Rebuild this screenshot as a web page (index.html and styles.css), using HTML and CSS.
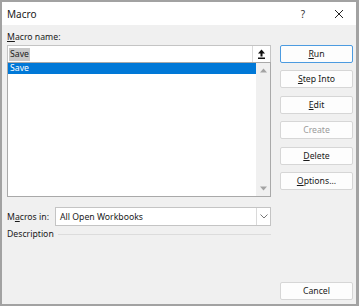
FILE: index.html
```html
<!DOCTYPE html>
<html lang="en">
<head>
    <meta charset="UTF-8">
    <title>Macro</title>
    <link rel="stylesheet" href="styles.css">
</head>
<body>
    <div class="dialog">
        <div class="titlebar">
            <span class="title">Macro</span>
            <span class="help">?</span>
            <svg class="close" width="10" height="10" viewBox="0 0 10 10">
                <path d="M1 1L9 9M9 1L1 9" stroke="#222" stroke-width="1" fill="none"/>
            </svg>
        </div>
        <div class="content">
            <div class="left">
                <div class="label"><u>M</u>acro name:</div>
                <div class="namebox">
                    <span class="value"><span class="sel">Save</span></span>
                    <span class="pick">
                        <svg width="9" height="10" viewBox="0 0 9 10">
                            <path d="M4.5 0.5L8 4.5H5.5V7.5H3.5V4.5H1Z" fill="#111"/>
                            <rect x="1" y="8.5" width="7" height="1.5" fill="#111"/>
                        </svg>
                    </span>
                </div>
                <div class="list">
                    <div class="items">
                        <div class="item active">Save</div>
                    </div>
                    <div class="scroll">
                        <svg width="7" height="5" viewBox="0 0 7 5"><path d="M3.5 0.5L7 4.5H0Z" fill="#a3a3a3"/></svg>
                        <svg width="7" height="5" viewBox="0 0 7 5"><path d="M0 0.5H7L3.5 4.5Z" fill="#a3a3a3"/></svg>
                    </div>
                </div>
                <div class="where">
                    <span class="where-label">M<u>a</u>cros in:</span>
                    <div class="select">
                        <span class="value">All Open Workbooks</span>
                        <span class="arrow">
                            <svg width="8" height="5" viewBox="0 0 8 5"><path d="M0.5 0.5L4 4L7.5 0.5" stroke="#777" stroke-width="1" fill="none"/></svg>
                        </span>
                    </div>
                </div>
                <div class="desc">Description</div>
            </div>
            <div class="right">
                <button class="btn default"><u>R</u>un</button>
                <button class="btn"><u>S</u>tep Into</button>
                <button class="btn"><u>E</u>dit</button>
                <button class="btn disabled">Create</button>
                <button class="btn"><u>D</u>elete</button>
                <button class="btn"><u>O</u>ptions...</button>
                <button class="btn cancel">Cancel</button>
            </div>
        </div>
    </div>
</body>
</html>
```

FILE: styles.css
```css
body {
    margin: 0;
    font-family: "Noto Sans", "Open Sans", sans-serif;
    font-size: 8.7px;
    color: #1a1a1a;
}
u {
    text-decoration-thickness: 1px;
    text-underline-offset: 1px;
}
.dialog {
    width: 359px;
    height: 306px;
    box-sizing: border-box;
    border: 2px solid #a2a2a2;
    border-right-width: 3px;
    background: #f0f0f0;
    display: flex;
    flex-direction: column;
}
.titlebar {
    height: 23px;
    background: #fff;
    display: flex;
    align-items: center;
    padding: 0 12px 0 5px;
}
.title {
    font-size: 10px;
    flex: 1;
}
.help {
    font-size: 10px;
    color: #333;
    margin-right: 29px;
}
.content {
    flex: 1;
    display: flex;
    gap: 9px;
    padding: 0 3px 4px 5px;
}
.left {
    width: 264px;
    display: flex;
    flex-direction: column;
}
.label {
    height: 12px;
    line-height: 12px;
    margin: 6px 0 2px;
}
.namebox {
    height: 18px;
    box-sizing: border-box;
    border: 1px solid #c4c4c4;
    background: #fff;
    display: flex;
}
.namebox .value {
    flex: 1;
    display: flex;
    align-items: center;
    padding-left: 1px;
}
.sel {
    background: #c8c8c8;
    padding: 0 1px;
    line-height: 13px;
}
.pick {
    width: 17px;
    border-left: 1px solid #dadada;
    display: flex;
    align-items: center;
    justify-content: center;
}
.list {
    height: 135px;
    margin-top: -1px;
    box-sizing: border-box;
    border: 1px solid #a9a9a9;
    background: #fff;
    display: flex;
}
.items {
    flex: 1;
}
.item {
    height: 11px;
    line-height: 11px;
    padding-left: 2px;
}
.item.active {
    background: #0078d7;
    color: #fff;
}
.scroll {
    width: 14px;
    background: #f0f0f0;
    display: flex;
    flex-direction: column;
    justify-content: space-between;
    align-items: center;
    padding: 5px 0 5px;
}
.where {
    display: flex;
    align-items: center;
    margin-top: 10px;
}
.where-label {
    width: 48px;
}
.select {
    flex: 1;
    height: 19px;
    box-sizing: border-box;
    border: 1px solid #c4c4c4;
    background: #fff;
    display: flex;
}
.select .value {
    flex: 1;
    display: flex;
    align-items: center;
    padding-left: 4px;
}
.select .arrow {
    width: 13px;
    border-left: 1px solid #dadada;
    display: flex;
    align-items: center;
    justify-content: center;
}
.desc {
    display: flex;
    align-items: center;
    height: 12px;
    margin-top: 2px;
}
.desc::after {
    content: "";
    flex: 1;
    border-top: 1px solid #dcdcdc;
    margin-left: 4px;
}
.right {
    width: 73px;
    display: flex;
    flex-direction: column;
    gap: 7.4px;
    padding-top: 20px;
}
.btn {
    height: 18px;
    box-sizing: border-box;
    padding: 0;
    border: 1px solid #d6d6d6;
    border-radius: 2px;
    background: #fdfdfd;
    font-family: inherit;
    font-size: 8.7px;
    color: #1a1a1a;
}
.btn.default {
    border-color: #4c9be0;
}
.btn.disabled {
    color: #9a9a9a;
}
.btn.cancel {
    margin-top: auto;
}
```
